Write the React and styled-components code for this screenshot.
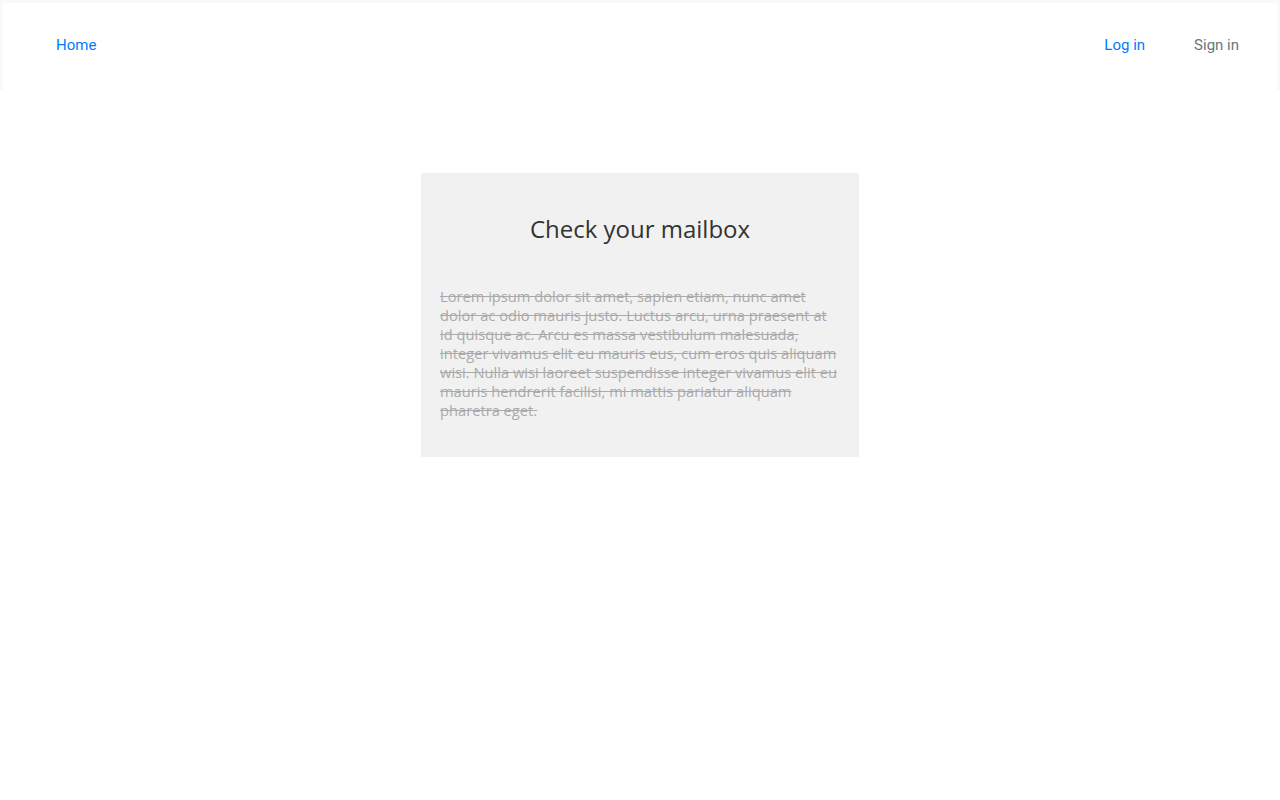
import styled, { createGlobalStyle } from "styled-components";

const GlobalStyle = createGlobalStyle`
  body {
    margin: 0;
    background: #fff;
    font-family: "Open Sans", sans-serif;
  }
`;

const HeaderFrame = styled.div`
  background: #f8f9fa;
  padding: 3px 3px 0;
`;

const Header = styled.nav`
  height: 87px;
  box-sizing: border-box;
  background: #fff;
  display: flex;
  align-items: center;
  justify-content: space-between;
  padding: 0 38px 3px 53px;
  font-family: Roboto, sans-serif;
  font-size: 15px;
`;

const NavGroup = styled.div`
  display: flex;
  align-items: center;
  gap: 49px;
`;

const NavLink = styled.a`
  color: ${(p) => (p.$muted ? "#6c757d" : "#007bff")};
  text-decoration: none;
  line-height: 20px;
`;

const Main = styled.main`
  display: flex;
  justify-content: center;
  padding-top: 83px;
`;

const Card = styled.section`
  width: 438px;
  box-sizing: border-box;
  background: #f1f1f1;
  padding: 40px 19px 37px;
`;

const Title = styled.h2`
  margin: 0 0 42px;
  text-align: center;
  font-size: 24px;
  font-weight: 400;
  line-height: 32px;
  color: #333;
`;

const Body = styled.p`
  margin: 0;
  font-size: 14.7px;
  line-height: 19px;
  color: #aaa;
  text-decoration: line-through;
`;

export default function App() {
  return (
    <>
      <GlobalStyle />
      <HeaderFrame>
        <Header>
          <NavLink href="#">Home</NavLink>
          <NavGroup>
            <NavLink href="#">Log in</NavLink>
            <NavLink href="#" $muted>
              Sign in
            </NavLink>
          </NavGroup>
        </Header>
      </HeaderFrame>
      <Main>
        <Card>
          <Title>Check your mailbox</Title>
          <Body>
            Lorem ipsum dolor sit amet, sapien etiam, nunc amet dolor ac odio
            mauris justo. Luctus arcu, urna praesent at id quisque ac. Arcu es
            massa vestibulum malesuada, integer vivamus elit eu mauris eus, cum
            eros quis aliquam wisi. Nulla wisi laoreet suspendisse integer
            vivamus elit eu mauris hendrerit facilisi, mi mattis pariatur
            aliquam pharetra eget.
          </Body>
        </Card>
      </Main>
    </>
  );
}
